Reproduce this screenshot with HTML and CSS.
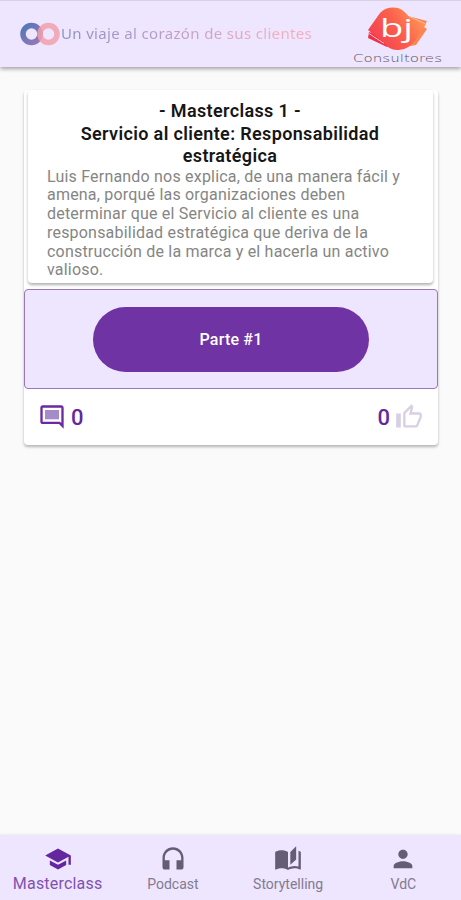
FILE: index.html
```html
<!DOCTYPE html>
<html lang="es">
<head>
  <meta charset="UTF-8" />
  <meta name="viewport" content="width=device-width, initial-scale=1.0" />
  <title>BJ Consultores - Masterclass</title>
  <link rel="stylesheet" href="styles.css">
</head>

<body>
  <div class="app">
    <header class="top-bar">
      <div class="slogan">
        <svg class="rings" viewBox="0 0 40 24" width="40" height="24">
          <defs>
            <linearGradient id="ringBlue" x1="0" y1="0" x2="1" y2="1">
              <stop offset="0" stop-color="#5278b8" />
              <stop offset="1" stop-color="#9a78b4" />
            </linearGradient>
          </defs>
          <circle cx="11.5" cy="12" r="8.5" fill="none" stroke="url(#ringBlue)" stroke-width="5.5" />
          <circle cx="28.5" cy="12" r="8.5" fill="none" stroke="#f2a0ac" stroke-width="5.5" opacity="0.85" />
        </svg>
        <span class="slogan-text">Un viaje al corazón de sus clientes</span>
      </div>
      <svg class="logo" viewBox="0 0 92 60" width="92" height="60">
        <defs>
          <linearGradient id="logoFill" x1="0" y1="0.7" x2="1" y2="0.2">
            <stop offset="0" stop-color="#f53f50" />
            <stop offset="0.5" stop-color="#fb5e4c" />
            <stop offset="1" stop-color="#ffa057" />
          </linearGradient>
        </defs>
        <path d="M57 11L76 16L73 22L76 24L65 40L48 43Z" fill="#fb8653" />
        <path d="M18 27L17 33L36 42L45 35Z" fill="#ef3148" />
        <path d="M17 25L29 8Q36 1 47 3Q53 5 58 12L75 19L65 34Q57 46 46 45Q38 45 32 37Z" fill="url(#logoFill)" />
        <path d="M18 28.5L33 38.5" fill="none" stroke="#fff" stroke-width="0.7" />
        <path d="M58 11.5L74 18.5" fill="none" stroke="#ffd3b5" stroke-width="0.7" />
        <text class="logo-letters" x="29" y="31.500" textLength="33" lengthAdjust="spacingAndGlyphs">bj</text>
        <text class="logo-name" x="2" y="57" textLength="89" lengthAdjust="spacingAndGlyphs">Consultores</text>
      </svg>
    </header>

    <main>
      <article class="card">
        <section class="intro">
          <h1>- Masterclass 1 -<br>Servicio al cliente: Responsabilidad<br>estratégica</h1>
          <p>Luis Fernando nos explica, de una manera fácil y<br>amena, porqué las organizaciones deben<br>determinar que el Servicio al cliente es una<br>responsabilidad estratégica que deriva de la<br>construcción de la marca y el hacerla un activo<br>valioso.</p>
        </section>
        <div class="parts">
          <button type="button">Parte #1</button>
        </div>
        <div class="reactions">
          <div class="comments">
            <svg viewBox="0 0 24 24" width="28" height="28">
              <path d="M6 6h12v8H6z" fill="#a58bc8" />
              <path d="M21.99 4c0-1.1-.89-2-1.99-2H4c-1.1 0-2 .9-2 2v12c0 1.1.9 2 2 2h14l4 4-.01-18zM20 4v13.17L18.83 16H4V4h16z" fill="#6a2aa0" />
            </svg>
            <span>0</span>
          </div>
          <div class="likes">
            <span>0</span>
            <svg viewBox="0 0 24 24" width="28" height="28">
              <path d="M9 21h9c.83 0 1.54-.5 1.84-1.22l3.02-7.05c.09-.23.14-.47.14-.73v-2c0-1.1-.9-2-2-2h-6.31l.95-4.57.03-.32c0-.41-.17-.79-.44-1.06L14.17 1 7.58 7.59C7.22 7.95 7 8.45 7 9v10c0 1.1.9 2 2 2zM9 9l4.34-4.34L12 10h9v2l-3 7H9V9zM1 9h4v12H1z" fill="#d7cfe3" />
            </svg>
          </div>
        </div>
      </article>
    </main>

    <nav class="tabs">
      <a class="tab active">
        <svg viewBox="0 0 24 24" width="28" height="28">
          <path d="M5 13.18v4L12 21l7-3.82v-4L12 17l-7-3.82zM12 3L1 9l11 6 9-4.91V17h2V9L12 3z" />
        </svg>
        <span>Masterclass</span>
      </a>
      <a class="tab">
        <svg viewBox="0 0 24 24" width="28" height="28">
          <path d="M12 2c-4.97 0-9 4.030-9 9v8c0 1.1.9 2 2 2h4v-8H5v-2c0-3.870 3.130-7 7-7s7 3.130 7 7v2h-4v8h4c1.1 0 2-.9 2-2v-8c0-4.970-4.030-9-9-9z" />
        </svg>
        <span>Podcast</span>
      </a>
      <a class="tab">
        <svg viewBox="0 0 24 24" width="28" height="28">
          <path d="M19 1l-5 5v11l5-4.5V1zM1 6v14.65c0 .25.25.5.5.5.1 0 .15-.05.25-.05C3.1 20.45 5.05 20 6.5 20c1.95 0 4.05.4 5.5 1.5V6c-1.45-1.1-3.55-1.5-5.5-1.5S2.45 4.9 1 6zM23 19.500V6c-.6-.45-1.25-.75-2-1v13.5c-1.1-.35-2.3-.5-3.5-.5-1.7 0-4.15.65-5.5 1.5v2c1.35-.85 3.8-1.5 5.5-1.5 1.65 0 3.35.3 4.75 1.05.1.05.15.05.25.05.25 0 .5-.25.5-.5v-1.100z" />
        </svg>
        <span>Storytelling</span>
      </a>
      <a class="tab">
        <svg viewBox="0 0 24 24" width="28" height="28">
          <path d="M12 12c2.21 0 4-1.79 4-4s-1.79-4-4-4-4 1.79-4 4 1.79 4 4 4zm0 2c-2.67 0-8 1.34-8 4v2h16v-2c0-2.66-5.33-4-8-4z" />
        </svg>
        <span>VdC</span>
      </a>
    </nav>
  </div>
</body>
</html>
```
FILE: styles.css
```css
:root {
  --lilac: #eee5fe;
  --purple: #6f33a3;
  --deep-purple: #65279d;
  --gray: #858585;
  --page: #fafafa;
}

* {
  box-sizing: border-box;
  margin: 0;
  padding: 0;
}

body {
  font-family: Roboto, sans-serif;
  background: var(--page);
}

.app {
  display: flex;
  flex-direction: column;
  height: 100vh;
}

.top-bar {
  display: flex;
  justify-content: space-between;
  height: 67px;
  padding: 4px 18px 0 20px;
  background: var(--lilac);
  border-top: 1px solid #d9d0e6;
  box-shadow: 0 2px 4px rgba(0, 0, 0, 0.35);
}

.slogan {
  display: flex;
  align-items: center;
  height: 57px;
  gap: 1px;
}

.slogan-text {
  padding-bottom: 2px;
  font-family: "Noto Sans", sans-serif;
  font-size: 15px;
  letter-spacing: 0.34px;
  white-space: nowrap;
  background: linear-gradient(90deg, #8c8fc0, #c5a0c6 50%, #f4adbd 85%);
  -webkit-background-clip: text;
  background-clip: text;
  color: transparent;
}

.logo-letters {
  font-family: "Open Sans", sans-serif;
  font-size: 26px;
  font-weight: 500;
  fill: #fff;
}

.logo-name {
  font-family: "DejaVu Sans", sans-serif;
  font-size: 11px;
  font-weight: 200;
  fill: #595263;
}

main {
  flex: 1;
  padding: 23px 23px 0 24px;
}

.card {
  background: #fff;
  border-radius: 4px;
  box-shadow: 0 2px 3px rgba(0, 0, 0, 0.28);
}

.intro {
  height: 193px;
  margin: 0 5px 6px 4px;
  padding: 10px 19px 0;
  background: #fff;
  border-radius: 4px;
  box-shadow: 0 2px 3px rgba(0, 0, 0, 0.3);
}

.intro h1 {
  margin: 0 -1px 0 -2px;
  font-size: 18px;
  font-weight: 600;
  line-height: 22.5px;
  letter-spacing: 0.35px;
  text-align: center;
  color: #161616;
}

.intro p {
  font-size: 16px;
  line-height: 18.8px;
  letter-spacing: 0.2px;
  white-space: nowrap;
  color: var(--gray);
}

.parts {
  display: flex;
  align-items: center;
  justify-content: center;
  height: 100px;
  background: var(--lilac);
  border: 1px solid #9878bd;
  border-radius: 4px;
}

.parts button {
  width: 276px;
  height: 65px;
  border: none;
  border-radius: 33px;
  background: var(--purple);
  color: #fff;
  font-family: inherit;
  font-size: 16px;
  font-weight: 500;
  letter-spacing: 0.2px;
}

.reactions {
  display: flex;
  align-items: center;
  justify-content: space-between;
  height: 56px;
  padding: 0 15px 0 14px;
  font-size: 22px;
  font-weight: 500;
  color: var(--deep-purple);
}

.comments,
.likes {
  display: flex;
  align-items: center;
  gap: 5px;
}

.tabs {
  display: grid;
  grid-template-columns: repeat(4, 1fr);
  height: 65px;
  background: var(--lilac);
  box-shadow: 0 -1px 2px rgba(0, 0, 0, 0.06);
}

.tab {
  display: flex;
  flex-direction: column;
  align-items: center;
  padding-top: 10px;
  font-size: 14px;
  line-height: 22px;
  color: #827b90;
}

.tab svg {
  fill: #655d73;
}

.tab.active {
  font-size: 16px;
  line-height: 21px;
  letter-spacing: 0.2px;
  color: #8250b0;
}

.tab.active svg {
  fill: var(--deep-purple);
}
```
